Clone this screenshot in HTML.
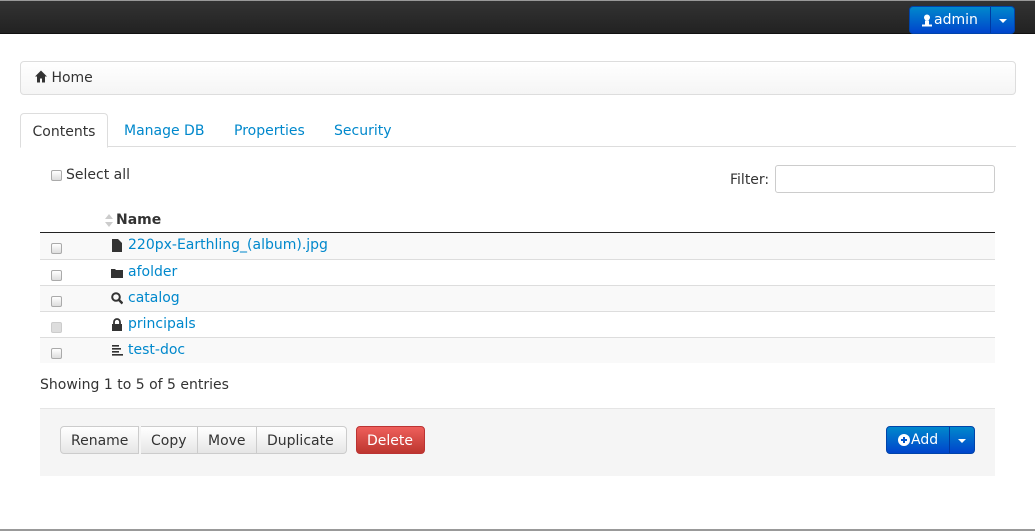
<!DOCTYPE html>
<html><head><meta charset="utf-8"><style>
*{box-sizing:border-box}
body{margin:0;width:1035px;height:531px;overflow:hidden;font-family:"DejaVu Sans","Liberation Sans",sans-serif;font-size:14px;color:#333;background:#fff;position:relative}
.a{position:absolute}
a{color:#0088cc;text-decoration:none}
.top{left:0;top:0;width:1035px;height:34px;background:linear-gradient(#333,#222);border-top:1px solid #999;border-bottom:1px solid #111}
.btnb{background:linear-gradient(#0088cc,#0044cc);color:#fff;border:1px solid #0044aa;border-radius:4px}
.bc{left:20px;top:61px;width:996px;height:34px;border:1px solid #ddd;border-radius:4px;background:linear-gradient(#fff,#f5f5f5);padding:8px 14px}
.tabs{left:20px;top:113px;width:996px;height:34px;border-bottom:1px solid #ddd}
.tab{position:absolute;top:1px;height:34px;line-height:34px}
.cb{position:absolute;width:11px;height:11px;border:1px solid #aaa;border-radius:2px;background:linear-gradient(#fff,#ddd)}
.row{position:absolute;left:40px;width:955px;height:26px;border-top:1px solid #ddd}
.row .n{position:absolute;left:88px;top:4px}
.row .ic{position:absolute;left:71px;top:6px;width:12px;height:13px}
.btng{position:absolute;top:426px;height:28px;border:1px solid #ccc;background:linear-gradient(#fff,#e6e6e6);line-height:28px;padding:0 10px;color:#333}
</style></head><body>
<div class="a top"></div>
<div class="a btnb" style="left:909px;top:6px;width:106px;height:28px">
 <svg class="a" style="left:12px;top:7px" width="10" height="13" viewBox="0 0 10 12"><circle cx="5" cy="3" r="3" fill="#fff"/><path d="M3 6h4v4h3v2H0v-2h3z" fill="#fff"/></svg>
 <span class="a" style="left:24px;top:5px">admin</span>
 <div class="a" style="left:80px;top:0;height:26px;border-left:1px solid #0039a0"></div>
 <div class="a" style="left:89px;top:12px;border:4px solid transparent;border-top:4px solid #fff;border-bottom:0"></div>
</div>
<div class="a bc"><svg style="vertical-align:-1px" width="12" height="13" viewBox="0 0 12 12"><path d="M6 0L0 6h2v6h3V8h2v4h3V6h2z" fill="#333"/></svg> Home</div>
<div class="a tabs">
 <div class="tab" style="left:0;top:0;width:88px;border:1px solid #ddd;border-bottom-color:#fff;border-radius:4px 4px 0 0;background:#fff;text-align:center;height:35px;line-height:34px;padding-top:1px">Contents</div>
 <a class="tab" style="left:104px">Manage DB</a>
 <a class="tab" style="left:214px">Properties</a>
 <a class="tab" style="left:314px">Security</a>
</div>
<div class="cb" style="left:51px;top:170px"></div>
<span class="a" style="left:66px;top:167px">Select all</span>
<span class="a" style="left:730px;top:172px">Filter:</span>
<div class="a" style="left:775px;top:165px;width:220px;height:28px;border:1px solid #ccc;border-radius:3px"></div>
<svg class="a" style="left:105px;top:213px" width="8" height="16"><path d="M0 6L4 1 8 6z M0 9L4 14 8 9z" fill="#ccc"/></svg>
<b class="a" style="left:116px;top:212px">Name</b>
<div class="a" style="left:40px;top:232px;width:955px;height:1px;background:#222"></div>
<div class="row" style="top:233px;background:#f9f9f9;border-top:0"><div class="cb" style="left:11px;top:10px"></div><svg class="ic" viewBox="0 0 12 13"><path d="M1 0h6l4 4v9H1z" fill="#333"/></svg><a class="n">220px-Earthling_(album).jpg</a></div>
<div class="row" style="top:259px"><div class="cb" style="left:11px;top:10px"></div><svg class="ic" viewBox="0 0 12 13"><path d="M0 3h4l1 1h7v8H0z" fill="#333"/></svg><a class="n">afolder</a></div>
<div class="row" style="top:285px;background:#f9f9f9"><div class="cb" style="left:11px;top:10px"></div><svg class="ic" viewBox="0 0 12 13"><circle cx="5" cy="5" r="3.8" stroke="#333" stroke-width="2" fill="none"/><path d="M7.5 7.5L11.5 11.5" stroke="#333" stroke-width="2.5"/></svg><a class="n">catalog</a></div>
<div class="row" style="top:311px"><div class="cb" style="left:11px;top:10px;border-color:#ccc;background:#ddd"></div><svg class="ic" viewBox="0 0 12 13"><path d="M3 6V4a3 3 0 016 0v2" stroke="#333" stroke-width="1.8" fill="none"/><rect x="1" y="6" width="10" height="7" fill="#333"/></svg><a class="n">principals</a></div>
<div class="row" style="top:337px;background:#f9f9f9"><div class="cb" style="left:11px;top:10px"></div><svg class="ic" viewBox="0 0 12 13"><path d="M1 1h7v1.6H1zM1 4h9v1.6H1zM1 7h7v1.6H1zM1 10h11v1.6H1z" fill="#333"/></svg><a class="n">test-doc</a></div>
<span class="a" style="left:40px;top:377px">Showing 1 to 5 of 5 entries</span>
<div class="a" style="left:40px;top:408px;width:955px;height:68px;background:#f5f5f5;border-top:1px solid #e5e5e5"></div>
<div class="btng" style="left:60px;border-radius:4px 0 0 4px">Rename</div>
<div class="btng" style="left:141px;border-left:0">Copy</div>
<div class="btng" style="left:198px;border-left:0">Move</div>
<div class="btng" style="left:257px;border-left:0;border-radius:0 4px 4px 0;width:90px">Duplicate</div>
<div class="btng" style="left:356px;background:linear-gradient(#ee5f5b,#bd362f);border-color:#b33;color:#fff;border-radius:4px;width:69px">Delete</div>
<div class="a btnb" style="left:886px;top:426px;width:89px;height:28px">
 <svg class="a" style="left:11px;top:7px" width="12" height="12"><circle cx="6" cy="6" r="6" fill="#fff"/><path d="M6 3v6M3 6h6" stroke="#0055cc" stroke-width="2"/></svg>
 <span class="a" style="left:24px;top:5px">Add</span>
 <div class="a" style="left:62px;top:0;height:26px;border-left:1px solid #0039a0"></div>
 <div class="a" style="left:71px;top:12px;border:4px solid transparent;border-top:4px solid #fff;border-bottom:0"></div>
</div>
<div class="a" style="left:0;top:529px;width:1035px;height:2px;background:#999"></div>
</body></html>
